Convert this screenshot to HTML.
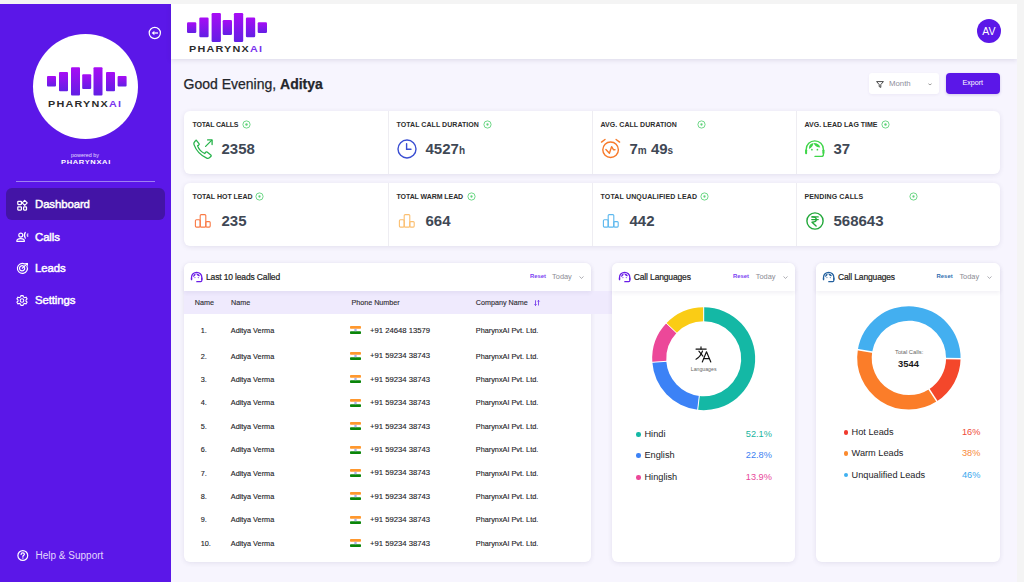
<!DOCTYPE html>
<html><head><meta charset="utf-8">
<style>
*{margin:0;padding:0;box-sizing:border-box}
html,body{width:1024px;height:582px;overflow:hidden;background:#f4f4f4;font-family:"Liberation Sans",sans-serif}
.abs{position:absolute}
svg{overflow:visible}
#app{position:absolute;left:0;top:4px;width:1017px;height:578px;background:#f7f5fe;overflow:hidden}
#side{position:absolute;left:0;top:0;width:171px;height:578px;background:#5b17e8}
.nav{position:absolute;left:0;width:171px;height:20px;color:#fff;font-size:11.4px;font-weight:normal;letter-spacing:-0.1px;white-space:nowrap;-webkit-text-stroke:0.45px #fff}
.nav svg{position:absolute;left:16px}
.nav span{position:absolute;left:35px}
#hdr{position:absolute;left:171px;top:0;width:846px;height:54.5px;background:#fff;box-shadow:0 1.5px 5px rgba(50,40,90,.12)}
.card{position:absolute;background:#fff;border-radius:6px;box-shadow:0 1px 5px rgba(50,40,100,.10)}
.stat{position:absolute;top:0;width:204px;height:63px}
.stat .lbl{position:absolute;left:9px;top:10px;font-size:7px;font-weight:bold;color:#2d2d2d;white-space:nowrap;letter-spacing:0.05px}
.stat .num{position:absolute;left:38px;top:28.5px;font-size:15px;font-weight:bold;color:#3f4855;white-space:nowrap}
.stat .num small{font-size:10px}
.stat .ico{position:absolute;left:9px;top:28px}
.stat .dot{position:absolute;top:8.8px}
.divl{position:absolute;top:0;width:1px;height:63px;background:#eeedf2}
.ch{position:absolute;left:0;top:0;height:28px;background:#fff;border-radius:6px 6px 0 0;box-shadow:0 2px 4px rgba(60,40,120,.07)}
.ch .t{position:absolute;left:22.5px;top:9px;font-size:8.5px;color:#1f1f24;letter-spacing:-0.15px;white-space:nowrap;-webkit-text-stroke:0.2px #1f1f24}
.ch .rs{position:absolute;font-size:5.9px;font-weight:bold;color:#7b3ff2;top:10.6px}
.ch .td{position:absolute;font-size:7.4px;color:#8b8b93;top:9.2px}
.tr{position:absolute;left:0;width:408px;height:20px;font-size:7.3px;color:#222226;white-space:nowrap;-webkit-text-stroke:0.12px #222226}
.tr span{position:absolute;top:0}
.flag{position:absolute;left:166.2px;width:11px;height:8px}
.leg{position:absolute;font-size:9.2px;color:#222226;white-space:nowrap}
.legdot{position:absolute;width:4.5px;height:4.5px;border-radius:50%}
</style></head>
<body>
<div id="app">
  <!-- SIDEBAR -->
  <div id="side">
    <svg class="abs" style="left:148px;top:22px" width="14" height="14" viewBox="0 0 14 14"><circle cx="6.8" cy="7" r="5.6" fill="none" stroke="#fff" stroke-width="1.2"/><path d="M3.7 7 L6.4 4.8 L6.4 9.2 Z" fill="#fff"/><rect x="6.2" y="6.35" width="3.8" height="1.3" fill="#fff"/></svg>
    <div class="abs" style="left:33px;top:30px;width:105px;height:105px;border-radius:50%;background:#fff"></div>
    <svg class="abs" style="left:47px;top:63px" width="80" height="29" viewBox="0 0 80 29">
      <defs><linearGradient id="lg1" x1="0" y1="0" x2="0" y2="1"><stop offset="0" stop-color="#a80cf5"/><stop offset="1" stop-color="#621fe4"/></linearGradient></defs>
      <rect x="0" y="9" width="9" height="10.6" rx="1" fill="url(#lg1)"/>
      <rect x="12" y="5" width="9" height="19.3" rx="1" fill="url(#lg1)"/>
      <rect x="24" y="0.3" width="9" height="28.3" rx="1" fill="url(#lg1)"/>
      <rect x="35.2" y="7.3" width="9" height="14.7" rx="1" fill="url(#lg1)"/>
      <rect x="46.5" y="0.3" width="9" height="28.3" rx="1" fill="url(#lg1)"/>
      <rect x="59" y="5" width="9" height="19.3" rx="1" fill="url(#lg1)"/>
      <rect x="70.6" y="9" width="9" height="10.6" rx="1" fill="url(#lg1)"/>
    </svg>
    <div class="abs" style="left:47.5px;top:94.6px;font-size:8.3px;font-weight:bold;letter-spacing:0.95px;transform:scaleX(1.3);transform-origin:0 0;color:#2b2b2b;white-space:nowrap">PHARYNX<span style="color:#7a33ee">AI</span></div>
    <div class="abs" style="left:71px;top:147.5px;font-size:5.4px;color:#e6dcff;white-space:nowrap">powered by</div>
    <div class="abs" style="left:61px;top:154.5px;font-size:5.8px;font-weight:bold;letter-spacing:0.5px;transform:scaleX(1.3);transform-origin:0 0;color:#fff;white-space:nowrap">PHARYNXAI</div>
    <div class="abs" style="left:16px;top:176.5px;width:139px;height:1px;background:#9f7ff2"></div>
    <div class="abs" style="left:6px;top:184px;width:159px;height:31.6px;border-radius:6px;background:#4314a6"></div>
    <div class="nav" style="top:192px"><svg style="top:3.5px" width="12" height="11" viewBox="0 0 12 11"><g fill="none" stroke="#fff" stroke-width="1.25" stroke-linejoin="round"><rect x="1.8" y="1.3" width="3.6" height="3.3" rx=".5"/><rect x="1.8" y="6.8" width="3.6" height="3.2" rx=".5"/><rect x="7.6" y="6.8" width="2.9" height="3.2" rx=".5"/><path d="M8.7 0.4 L11.2 2.9 L8.7 5.4 L6.2 2.9 Z"/></g></svg><span style="top:2px">Dashboard</span></div>
    <div class="nav" style="top:225px"><svg style="top:3px" width="13" height="11" viewBox="0 0 13 11"><g fill="none" stroke="#fff" stroke-width="1.2" stroke-linecap="round" stroke-linejoin="round"><circle cx="4.8" cy="3.1" r="2"/><path d="M0.8 9.3 C0.8 7.4 2.4 6.7 4.6 6.7 C6.8 6.7 8.4 7.4 8.4 9.3 Z"/><path d="M9.3 0.4 C8.3 2 8.3 4.6 9.3 6.2"/></g><path d="M11.9 1.4 C10.7 2.4 10.7 3.9 11.9 4.9 Z" fill="#e6dcff" stroke="#e6dcff" stroke-width="0.6"/></svg><span style="top:2px">Calls</span></div>
    <div class="nav" style="top:256px"><svg style="top:3px" width="12" height="11" viewBox="0 0 12 11"><g fill="none" stroke="#fff" stroke-width="1.2" stroke-linecap="round"><path d="M10.9 3.2 A5 5 0 1 1 8.6 0.9"/><path d="M7.6 3.2 A2.6 2.6 0 1 0 8.6 4.6"/><path d="M6.3 5.2 L11.2 0.6"/><path d="M9.6 0.5 L11.4 0.5 L11.4 2.2"/></g></svg><span style="top:2px">Leads</span></div>
    <div class="nav" style="top:288px"><svg style="top:3px" width="12" height="11" viewBox="0 0 12 11"><g fill="none" stroke="#fff" stroke-width="1.1"><path d="M5 0.6 h2 l0.4 1.4 l1.3 0.7 l1.4-0.5 l1 1.7 l-1.1 1 v1.3 l1.1 1 l-1 1.7 l-1.4-0.5 l-1.3 0.7 l-0.4 1.4 h-2 l-0.4-1.4 l-1.3-0.7 l-1.4 0.5 l-1-1.7 l1.1-1 v-1.3 l-1.1-1 l1-1.7 l1.4 0.5 l1.3-0.7 z"/><circle cx="6" cy="5.5" r="1.8"/></g></svg><span style="top:2px">Settings</span></div>
    <svg class="abs" style="left:16.5px;top:545.5px" width="12" height="12" viewBox="0 0 12 12"><g fill="none" stroke="#fff" stroke-width="1.2" stroke-linecap="round"><circle cx="5.8" cy="5.5" r="4.9"/><path d="M4.1 4.4 C4.1 3.4 4.9 2.9 5.8 2.9 C6.8 2.9 7.4 3.5 7.4 4.3 C7.4 5.2 5.9 5.4 5.9 6.5"/></g><circle cx="5.9" cy="8" r="0.75" fill="#fff"/></svg>
    <div class="abs" style="left:35.5px;top:546px;font-size:10px;color:#e2d6fd;white-space:nowrap">Help &amp; Support</div>
  </div>

  <!-- HEADER -->
  <div id="hdr">
    <svg class="abs" style="left:16px;top:8.5px" width="81" height="30" viewBox="0 0 81 30">
      <defs><linearGradient id="lg2" x1="0" y1="0" x2="0" y2="1"><stop offset="0" stop-color="#a80cf5"/><stop offset="1" stop-color="#621fe4"/></linearGradient></defs>
      <rect x="0" y="9.2" width="9.3" height="10.8" rx="1.2" fill="url(#lg2)"/>
      <rect x="12.3" y="4.6" width="9.3" height="19.6" rx="1.2" fill="url(#lg2)"/>
      <rect x="24.6" y="0" width="9.3" height="29" rx="1.2" fill="url(#lg2)"/>
      <rect x="35.7" y="7.1" width="9.3" height="14.9" rx="1.2" fill="url(#lg2)"/>
      <rect x="46.9" y="0" width="9.3" height="29" rx="1.2" fill="url(#lg2)"/>
      <rect x="58.9" y="4.6" width="9.3" height="19.6" rx="1.2" fill="url(#lg2)"/>
      <rect x="70.7" y="9.2" width="9.3" height="10.8" rx="1.2" fill="url(#lg2)"/>
    </svg>
    <div class="abs" style="left:17.5px;top:39.7px;font-size:8.3px;font-weight:bold;letter-spacing:0.95px;transform:scaleX(1.3);transform-origin:0 0;color:#2b2b2b;white-space:nowrap">PHARYNX<span style="color:#7a33ee">AI</span></div>
    <div class="abs" style="left:806px;top:15px;width:24px;height:24px;border-radius:50%;background:#5b17e8;color:#fff;font-size:10.5px;text-align:center;line-height:24px;letter-spacing:.2px">AV</div>
  </div>

  <!-- GREETING -->
  <div class="abs" style="left:183.5px;top:71.5px;font-size:14px;color:#24262b;white-space:nowrap;-webkit-text-stroke:0.25px #24262b">Good Evening, <b>Aditya</b></div>
  <div class="abs" style="left:869px;top:69px;width:70px;height:21px;background:#fff;border-radius:3px;box-shadow:0 1px 3px rgba(60,40,120,.06)">
    <svg class="abs" style="left:7px;top:7.5px" width="8" height="7" viewBox="0 0 8 7"><path d="M0.6 0.6 H7.4 L4.8 3.6 V6.4 L3.2 5.6 V3.6 Z" fill="none" stroke="#333" stroke-width="0.9" stroke-linejoin="round"/></svg>
    <div class="abs" style="left:20px;top:5.9px;font-size:7.8px;color:#8e8e9a">Month</div>
    <svg class="abs" style="left:59px;top:9.5px" width="4" height="3" viewBox="0 0 4 3"><path d="M0.4 0.7 L2 1.9 L3.6 0.7" fill="none" stroke="#888" stroke-width="0.8"/></svg>
  </div>
  <div class="abs" style="left:946px;top:69px;width:53.5px;height:21px;background:#5b17e8;border-radius:4px;box-shadow:0 1px 3px rgba(60,20,160,.2);color:#fff;font-size:7.1px;text-align:center;line-height:21px">Export</div>

  <!-- STATS ROW 1 -->
  <div class="card" style="left:183.5px;top:107px;width:816px;height:63px">
    <div class="stat" style="left:0">
      <div class="lbl" style="letter-spacing:-0.180px">TOTAL CALLS</div>
      <svg class="dot" style="left:58.2px" width="9" height="9" viewBox="0 0 9 9"><circle cx="4.5" cy="4.5" r="3.6" fill="none" stroke="#5fd27a" stroke-width="0.9"/><circle cx="4.5" cy="4.5" r="1.2" fill="#5fd27a"/></svg>
      <svg class="ico" style="left:9px;top:27.5px" width="20" height="20" viewBox="0 0 20 20"><g fill="none" stroke="#27b34b" stroke-width="1.3" stroke-linejoin="round" stroke-linecap="round"><path d="M3.2 1.2 L6 4.6 C6.4 5.1 6.2 5.7 5.7 6.1 L4.6 6.9 C5.6 9.8 8.8 13.2 11.7 14.5 L12.6 13.3 C13 12.8 13.6 12.7 14.1 13.1 L17.8 16 C18.3 16.4 18.3 17.1 17.8 17.6 L16.4 18.8 C15.6 19.4 14.6 19.5 13.7 19.1 C7.8 16.4 3.2 11.6 1 5.6 C0.7 4.7 0.8 3.7 1.5 3 L2.6 1.6 C2.8 1.3 3 1.2 3.2 1.2 Z"/><path d="M12.6 7.4 L18.6 1.4"/><path d="M14.6 0.9 H19.1 V5.5"/></g></svg>
      <div class="num">2358</div>
    </div>
    <div class="divl" style="left:204px"></div>
    <div class="stat" style="left:204px">
      <div class="lbl" style="letter-spacing:0.056px">TOTAL CALL DURATION</div>
      <svg class="dot" style="left:95.2px" width="9" height="9" viewBox="0 0 9 9"><circle cx="4.5" cy="4.5" r="3.6" fill="none" stroke="#5fd27a" stroke-width="0.9"/><circle cx="4.5" cy="4.5" r="1.15" fill="#5fd27a"/></svg>
      <svg class="ico" style="left:9px;top:27.5px" width="20" height="20" viewBox="0 0 20 20"><g fill="none" stroke="#3a4ed2" stroke-width="1.4" stroke-linecap="round"><circle cx="10" cy="10" r="9"/><path d="M9.6 4.8 V10.2 H14"/></g></svg>
      <div class="num">4527<small>h</small></div>
    </div>
    <div class="divl" style="left:408px"></div>
    <div class="stat" style="left:408px">
      <div class="lbl" style="letter-spacing:0.056px">AVG. CALL DURATION</div>
      <svg class="dot" style="left:105.2px" width="9" height="9" viewBox="0 0 9 9"><circle cx="4.5" cy="4.5" r="3.6" fill="none" stroke="#5fd27a" stroke-width="0.9"/><circle cx="4.5" cy="4.5" r="1.15" fill="#5fd27a"/></svg>
      <svg class="ico" style="left:8.5px;top:27px" width="21" height="21" viewBox="0 0 21 21"><g fill="none" stroke="#f77a2a" stroke-width="1.4" stroke-linecap="round" stroke-linejoin="round"><circle cx="10.6" cy="11.75" r="7.8"/><path d="M1.5 4.1 L5 1.5"/><path d="M19.6 4.1 L16.1 1.5"/><path d="M5.9 11.6 L9.4 15.2 L11.6 8.6 L13.6 11.8 H15"/></g></svg>
      <div class="num">7<small>m</small> 49<small>s</small></div>
    </div>
    <div class="divl" style="left:612px"></div>
    <div class="stat" style="left:612px">
      <div class="lbl" style="letter-spacing:0.003px">AVG. LEAD LAG TIME</div>
      <svg class="dot" style="left:85.7px" width="9" height="9" viewBox="0 0 9 9"><circle cx="4.5" cy="4.5" r="3.6" fill="none" stroke="#5fd27a" stroke-width="0.9"/><circle cx="4.5" cy="4.5" r="1.2" fill="#5fd27a"/></svg>
      <svg class="ico" style="left:6.5px;top:26px" width="26" height="23" viewBox="0 0 26 23"><g fill="none" stroke="#3ed548" stroke-width="1.35" stroke-linecap="round" stroke-linejoin="round"><path d="M4.2 15.5 V12.4 A8.6 8.6 0 0 1 21.4 12.4 V17.4 Q21.4 19.4 19.4 19.4 H13"/></g><g fill="#3ed548"><rect x="3.1" y="12.4" width="2.0" height="4.8" rx="0.9"/><rect x="20.45" y="12.4" width="2.0" height="4.4" rx="0.9"/><path d="M7 11.9 Q6.6 6.8 11.4 6 Q11.4 9.6 7 11.9 Z"/><path d="M11.5 5.9 Q17.2 5.8 18.2 10.4 Q13.6 10.4 11.5 5.9 Z"/><circle cx="9.9" cy="12.7" r="0.85"/><circle cx="15.4" cy="12.7" r="0.85"/></g></svg>
      <div class="num">37</div>
    </div>
  </div>

  <!-- STATS ROW 2 -->
  <div class="card" style="left:183.5px;top:179px;width:816px;height:63px">
    <div class="stat" style="left:0">
      <div class="lbl" style="letter-spacing:-0.012px">TOTAL HOT LEAD</div>
      <svg class="dot" style="left:71.7px" width="9" height="9" viewBox="0 0 9 9"><circle cx="4.5" cy="4.5" r="3.6" fill="none" stroke="#5fd27a" stroke-width="0.9"/><circle cx="4.5" cy="4.5" r="1.15" fill="#5fd27a"/></svg>
      <svg class="ico" style="left:10px;top:30px" width="18" height="15" viewBox="0 0 18 15"><g fill="none" stroke="#f97a45" stroke-width="1.1" stroke-linejoin="round"><rect x="1.4" y="6.7" width="4.8" height="7.4" rx="1"/><rect x="6.2" y="1.6" width="5.6" height="12.5" rx="1"/><rect x="11.8" y="8.6" width="4.4" height="5.5" rx="1"/></g></svg>
      <div class="num">235</div>
    </div>
    <div class="divl" style="left:204px"></div>
    <div class="stat" style="left:204px">
      <div class="lbl" style="letter-spacing:-0.071px">TOTAL WARM LEAD</div>
      <svg class="dot" style="left:79.7px" width="9" height="9" viewBox="0 0 9 9"><circle cx="4.5" cy="4.5" r="3.6" fill="none" stroke="#5fd27a" stroke-width="0.9"/><circle cx="4.5" cy="4.5" r="1.15" fill="#5fd27a"/></svg>
      <svg class="ico" style="left:10px;top:30px" width="18" height="15" viewBox="0 0 18 15"><g fill="none" stroke="#fbbf70" stroke-width="1.1" stroke-linejoin="round"><rect x="1.4" y="6.7" width="4.8" height="7.4" rx="1"/><rect x="6.2" y="1.6" width="5.6" height="12.5" rx="1"/><rect x="11.8" y="8.6" width="4.4" height="5.5" rx="1"/></g></svg>
      <div class="num">664</div>
    </div>
    <div class="divl" style="left:408px"></div>
    <div class="stat" style="left:408px">
      <div class="lbl" style="letter-spacing:0.155px">TOTAL UNQUALIFIED LEAD</div>
      <svg class="dot" style="left:108.2px" width="9" height="9" viewBox="0 0 9 9"><circle cx="4.5" cy="4.5" r="3.6" fill="none" stroke="#5fd27a" stroke-width="0.9"/><circle cx="4.5" cy="4.5" r="1.15" fill="#5fd27a"/></svg>
      <svg class="ico" style="left:10px;top:30px" width="18" height="15" viewBox="0 0 18 15"><g fill="none" stroke="#5cb8ee" stroke-width="1.1" stroke-linejoin="round"><rect x="1.4" y="6.7" width="4.8" height="7.4" rx="1"/><rect x="6.2" y="1.6" width="5.6" height="12.5" rx="1"/><rect x="11.8" y="8.6" width="4.4" height="5.5" rx="1"/></g></svg>
      <div class="num">442</div>
    </div>
    <div class="divl" style="left:612px"></div>
    <div class="stat" style="left:612px">
      <div class="lbl" style="letter-spacing:0.125px">PENDING CALLS</div>
      <svg class="dot" style="left:113.2px" width="9" height="9" viewBox="0 0 9 9"><circle cx="4.5" cy="4.5" r="3.6" fill="none" stroke="#5fd27a" stroke-width="0.9"/><circle cx="4.5" cy="4.5" r="1.15" fill="#5fd27a"/></svg>
      <svg class="ico" style="left:10px;top:28.5px" width="18" height="18" viewBox="0 0 18 18"><g fill="none" stroke="#22a83a" stroke-width="1.4" stroke-linecap="round" stroke-linejoin="round"><circle cx="9" cy="9" r="8.1"/><path d="M5.8 4.9 H12.2"/><path d="M5.8 7.6 H12.2"/><path d="M6.4 4.9 C9.2 4.9 10.3 5.7 10.3 7.6 C10.3 9.4 9 10.2 6 10.2 L10.1 14"/></g></svg>
      <div class="num">568643</div>
    </div>
  </div>
<!-- TABLE CARD -->
<div class="card" style="left:183.5px;top:258.8px;width:407.5px;height:299px;overflow:visible">
  <div class="abs" style="left:0;top:28.4px;width:428px;height:23.3px;background:#efeafd"></div>
  <div class="ch" style="width:407.5px">
    <svg class="abs" style="left:5.4px;top:7.1px" width="15.6" height="13.8" viewBox="0 0 26 23"><g fill="none" stroke="#6a1de6" stroke-width="2.1" stroke-linecap="round" stroke-linejoin="round"><path d="M4.2 15.5 V12.4 A8.6 8.6 0 0 1 21.4 12.4 V17.4 Q21.4 19.4 19.4 19.4 H13"/></g><g fill="#6a1de6"><rect x="3.1" y="12.4" width="2.2" height="4.8" rx="0.9"/><rect x="20.25" y="12.4" width="2.2" height="4.4" rx="0.9"/><path d="M7 11.9 Q6.6 6.8 11.4 6 Q11.4 9.6 7 11.9 Z"/><path d="M11.5 5.9 Q17.2 5.8 18.2 10.4 Q13.6 10.4 11.5 5.9 Z"/><circle cx="9.9" cy="12.7" r="0.85"/><circle cx="15.4" cy="12.7" r="0.85"/></g></svg>
    <div class="t" style="top:9.3px">Last 10 leads Called</div>
    <div class="rs" style="left:346.4px">Reset</div>
    <div class="td" style="left:368.6px">Today</div>
    <svg class="abs" style="left:395px;top:13px" width="5" height="3" viewBox="0 0 5 3"><path d="M0.5 0.5 L2.5 2.4 L4.5 0.5" fill="none" stroke="#8b8b93" stroke-width="0.7"/></svg>
  </div>
  <div class="tr" style="top:35.5px;font-size:7.2px;color:#2f2f35"><span style="left:11.3px">Name</span><span style="left:47.5px">Name</span><span style="left:167.9px">Phone Number</span><span style="left:292.3px">Company Name</span><svg class="abs" style="left:350px;top:1.5px" width="6" height="6" viewBox="0 0 6 6"><g fill="none" stroke="#6a2be8" stroke-width="0.8"><path d="M1.5 0.3 V5.5 M0.4 4.3 L1.5 5.5 L2.6 4.3"/><path d="M4.5 5.5 V0.3 M3.4 1.5 L4.5 0.3 L5.6 1.5"/></g></svg></div>
  <div class="tr" style="top:63.2px"><span style="left:17.2px">1.</span><span style="left:47.3px">Aditya Verma</span><svg class="flag" style="top:0.4px" width="11" height="8" viewBox="0 0 11 8"><rect x="0" y="0" width="11" height="2.8" rx="0.8" fill="#ff982e"/><rect x="0" y="5.2" width="11" height="2.8" rx="0.8" fill="#0a850a"/><circle cx="5.5" cy="4" r="1.3" fill="#aab0e8"/></svg><span style="left:186.5px;font-size:7.7px;top:-0.3px">+91 24648 13579</span><span style="left:292.3px">PharynxAI Pvt. Ltd.</span></div>
  <div class="tr" style="top:88.9px"><span style="left:17.2px">2.</span><span style="left:47.3px">Aditya Verma</span><svg class="flag" style="top:0.4px" width="11" height="8" viewBox="0 0 11 8"><rect x="0" y="0" width="11" height="2.8" rx="0.8" fill="#ff982e"/><rect x="0" y="5.2" width="11" height="2.8" rx="0.8" fill="#0a850a"/><circle cx="5.5" cy="4" r="1.3" fill="#aab0e8"/></svg><span style="left:186.5px;font-size:7.7px;top:-0.3px">+91 59234 38743</span><span style="left:292.3px">PharynxAI Pvt. Ltd.</span></div>
  <div class="tr" style="top:112.3px"><span style="left:17.2px">3.</span><span style="left:47.3px">Aditya Verma</span><svg class="flag" style="top:0.4px" width="11" height="8" viewBox="0 0 11 8"><rect x="0" y="0" width="11" height="2.8" rx="0.8" fill="#ff982e"/><rect x="0" y="5.2" width="11" height="2.8" rx="0.8" fill="#0a850a"/><circle cx="5.5" cy="4" r="1.3" fill="#aab0e8"/></svg><span style="left:186.5px;font-size:7.7px;top:-0.3px">+91 59234 38743</span><span style="left:292.3px">PharynxAI Pvt. Ltd.</span></div>
  <div class="tr" style="top:135.7px"><span style="left:17.2px">4.</span><span style="left:47.3px">Aditya Verma</span><svg class="flag" style="top:0.4px" width="11" height="8" viewBox="0 0 11 8"><rect x="0" y="0" width="11" height="2.8" rx="0.8" fill="#ff982e"/><rect x="0" y="5.2" width="11" height="2.8" rx="0.8" fill="#0a850a"/><circle cx="5.5" cy="4" r="1.3" fill="#aab0e8"/></svg><span style="left:186.5px;font-size:7.7px;top:-0.3px">+91 59234 38743</span><span style="left:292.3px">PharynxAI Pvt. Ltd.</span></div>
  <div class="tr" style="top:159.1px"><span style="left:17.2px">5.</span><span style="left:47.3px">Aditya Verma</span><svg class="flag" style="top:0.4px" width="11" height="8" viewBox="0 0 11 8"><rect x="0" y="0" width="11" height="2.8" rx="0.8" fill="#ff982e"/><rect x="0" y="5.2" width="11" height="2.8" rx="0.8" fill="#0a850a"/><circle cx="5.5" cy="4" r="1.3" fill="#aab0e8"/></svg><span style="left:186.5px;font-size:7.7px;top:-0.3px">+91 59234 38743</span><span style="left:292.3px">PharynxAI Pvt. Ltd.</span></div>
  <div class="tr" style="top:182.5px"><span style="left:17.2px">6.</span><span style="left:47.3px">Aditya Verma</span><svg class="flag" style="top:0.4px" width="11" height="8" viewBox="0 0 11 8"><rect x="0" y="0" width="11" height="2.8" rx="0.8" fill="#ff982e"/><rect x="0" y="5.2" width="11" height="2.8" rx="0.8" fill="#0a850a"/><circle cx="5.5" cy="4" r="1.3" fill="#aab0e8"/></svg><span style="left:186.5px;font-size:7.7px;top:-0.3px">+91 59234 38743</span><span style="left:292.3px">PharynxAI Pvt. Ltd.</span></div>
  <div class="tr" style="top:205.9px"><span style="left:17.2px">7.</span><span style="left:47.3px">Aditya Verma</span><svg class="flag" style="top:0.4px" width="11" height="8" viewBox="0 0 11 8"><rect x="0" y="0" width="11" height="2.8" rx="0.8" fill="#ff982e"/><rect x="0" y="5.2" width="11" height="2.8" rx="0.8" fill="#0a850a"/><circle cx="5.5" cy="4" r="1.3" fill="#aab0e8"/></svg><span style="left:186.5px;font-size:7.7px;top:-0.3px">+91 59234 38743</span><span style="left:292.3px">PharynxAI Pvt. Ltd.</span></div>
  <div class="tr" style="top:229.3px"><span style="left:17.2px">8.</span><span style="left:47.3px">Aditya Verma</span><svg class="flag" style="top:0.4px" width="11" height="8" viewBox="0 0 11 8"><rect x="0" y="0" width="11" height="2.8" rx="0.8" fill="#ff982e"/><rect x="0" y="5.2" width="11" height="2.8" rx="0.8" fill="#0a850a"/><circle cx="5.5" cy="4" r="1.3" fill="#aab0e8"/></svg><span style="left:186.5px;font-size:7.7px;top:-0.3px">+91 59234 38743</span><span style="left:292.3px">PharynxAI Pvt. Ltd.</span></div>
  <div class="tr" style="top:252.7px"><span style="left:17.2px">9.</span><span style="left:47.3px">Aditya Verma</span><svg class="flag" style="top:0.4px" width="11" height="8" viewBox="0 0 11 8"><rect x="0" y="0" width="11" height="2.8" rx="0.8" fill="#ff982e"/><rect x="0" y="5.2" width="11" height="2.8" rx="0.8" fill="#0a850a"/><circle cx="5.5" cy="4" r="1.3" fill="#aab0e8"/></svg><span style="left:186.5px;font-size:7.7px;top:-0.3px">+91 59234 38743</span><span style="left:292.3px">PharynxAI Pvt. Ltd.</span></div>
  <div class="tr" style="top:276.1px"><span style="left:17.2px">10.</span><span style="left:47.3px">Aditya Verma</span><svg class="flag" style="top:0.4px" width="11" height="8" viewBox="0 0 11 8"><rect x="0" y="0" width="11" height="2.8" rx="0.8" fill="#ff982e"/><rect x="0" y="5.2" width="11" height="2.8" rx="0.8" fill="#0a850a"/><circle cx="5.5" cy="4" r="1.3" fill="#aab0e8"/></svg><span style="left:186.5px;font-size:7.7px;top:-0.3px">+91 59234 38743</span><span style="left:292.3px">PharynxAI Pvt. Ltd.</span></div>
</div>
<!-- LANG CARD -->
<div class="card" style="left:611.8px;top:258.8px;width:183px;height:299px">
  <div class="ch" style="width:183px">
    <svg class="abs" style="left:5.4px;top:7.1px" width="15.6" height="13.8" viewBox="0 0 26 23"><g fill="none" stroke="#6a1de6" stroke-width="2.1" stroke-linecap="round" stroke-linejoin="round"><path d="M4.2 15.5 V12.4 A8.6 8.6 0 0 1 21.4 12.4 V17.4 Q21.4 19.4 19.4 19.4 H13"/></g><g fill="#6a1de6"><rect x="3.1" y="12.4" width="2.2" height="4.8" rx="0.9"/><rect x="20.25" y="12.4" width="2.2" height="4.4" rx="0.9"/><path d="M7 11.9 Q6.6 6.8 11.4 6 Q11.4 9.6 7 11.9 Z"/><path d="M11.5 5.9 Q17.2 5.8 18.2 10.4 Q13.6 10.4 11.5 5.9 Z"/><circle cx="9.9" cy="12.7" r="0.85"/><circle cx="15.4" cy="12.7" r="0.85"/></g></svg>
    <div class="t" style="left:22px;top:9.3px">Call Languages</div>
    <div class="rs" style="left:121.2px">Reset</div>
    <div class="td" style="left:144px">Today</div>
    <svg class="abs" style="left:171px;top:13px" width="5" height="3" viewBox="0 0 5 3"><path d="M0.5 0.5 L2.5 2.4 L4.5 0.5" fill="none" stroke="#8b8b93" stroke-width="0.7"/></svg>
  </div>
  <svg class="abs" style="left:37.90000000000002px;top:42.10000000000001px" width="107.4" height="107.4" viewBox="-53.7 -53.7 107.4 107.4"><path d="M0.00 -51.50 A51.5 51.5 0 1 1 -6.01 51.15 L-4.38 37.24 A37.5 37.5 0 1 0 0.00 -37.50 Z" fill="#14b8a5"/><path d="M-6.01 51.15 A51.5 51.5 0 0 1 -51.37 3.59 L-37.41 2.62 A37.5 37.5 0 0 0 -4.38 37.24 Z" fill="#3c82f6"/><path d="M-51.37 3.59 A51.5 51.5 0 0 1 -37.36 -35.45 L-27.20 -25.81 A37.5 37.5 0 0 0 -37.41 2.62 Z" fill="#ec4899"/><path d="M-37.36 -35.45 A51.5 51.5 0 0 1 -0.00 -51.50 L-0.00 -37.50 A37.5 37.5 0 0 0 -27.20 -25.81 Z" fill="#facc15"/><line x1="0.00" y1="-36.50" x2="0.00" y2="-52.50" stroke="#fff" stroke-width="1.0"/><line x1="-4.26" y1="36.25" x2="-6.13" y2="52.14" stroke="#fff" stroke-width="1.0"/><line x1="-36.41" y1="2.55" x2="-52.37" y2="3.66" stroke="#fff" stroke-width="1.0"/><line x1="-26.48" y1="-25.12" x2="-38.08" y2="-36.14" stroke="#fff" stroke-width="1.0"/></svg>
  <svg class="abs" style="left:83.2px;top:83.7px" width="17" height="17" viewBox="0 0 17 17"><g fill="none" stroke="#111" stroke-width="1.15" stroke-linecap="round" stroke-linejoin="round"><path d="M1 3.1 H11.2"/><path d="M6 0.9 V3.1"/><path d="M3.9 5.1 L7.9 10.2"/><path d="M7.5 5 C6.4 8.2 4.4 11.4 1 13.2"/><path d="M7.3 16 L11.5 5.8 L15.8 16"/><path d="M8.7 12.6 H14.3"/></g></svg>
  <div class="abs" style="left:79.0px;top:103.4px;font-size:5.2px;color:#666;white-space:nowrap">Languages</div>
  <div class="legdot" style="left:24.3px;top:169.6px;background:#14b8a5"></div>
  <div class="leg" style="left:32.7px;top:166.2px">Hindi</div>
  <div class="leg" style="right:22.9px;top:166.2px;color:#19b5a0">52.1%</div>
  <div class="legdot" style="left:24.3px;top:190.6px;background:#3c82f6"></div>
  <div class="leg" style="left:32.7px;top:187.2px">English</div>
  <div class="leg" style="right:22.9px;top:187.2px;color:#3c7ff2">22.8%</div>
  <div class="legdot" style="left:24.3px;top:212.6px;background:#ec4899"></div>
  <div class="leg" style="left:32.7px;top:209.2px">Hinglish</div>
  <div class="leg" style="right:22.9px;top:209.2px;color:#e8479a">13.9%</div>
</div>
<!-- LEADS CARD -->
<div class="card" style="left:816px;top:258.8px;width:183.5px;height:299px">
  <div class="ch" style="width:183.5px">
    <svg class="abs" style="left:5.2px;top:7.1px" width="15.6" height="13.8" viewBox="0 0 26 23"><g fill="none" stroke="#22609e" stroke-width="2.1" stroke-linecap="round" stroke-linejoin="round"><path d="M4.2 15.5 V12.4 A8.6 8.6 0 0 1 21.4 12.4 V17.4 Q21.4 19.4 19.4 19.4 H13"/></g><g fill="#22609e"><rect x="3.1" y="12.4" width="2.2" height="4.8" rx="0.9"/><rect x="20.25" y="12.4" width="2.2" height="4.4" rx="0.9"/><path d="M7 11.9 Q6.6 6.8 11.4 6 Q11.4 9.6 7 11.9 Z"/><path d="M11.5 5.9 Q17.2 5.8 18.2 10.4 Q13.6 10.4 11.5 5.9 Z"/><circle cx="9.9" cy="12.7" r="0.85"/><circle cx="15.4" cy="12.7" r="0.85"/></g></svg>
    <div class="t" style="left:22px;top:9.3px">Call Languages</div>
    <div class="rs" style="left:120.6px;color:#2f6fb0">Reset</div>
    <div class="td" style="left:143.4px">Today</div>
    <svg class="abs" style="left:171px;top:13px" width="5" height="3" viewBox="0 0 5 3"><path d="M0.5 0.5 L2.5 2.4 L4.5 0.5" fill="none" stroke="#8b8b93" stroke-width="0.7"/></svg>
  </div>
  <svg class="abs" style="left:39.200000000000024px;top:40.79999999999999px" width="107.8" height="107.8" viewBox="-53.9 -53.9 107.8 107.8"><path d="M51.69 0.72 A51.7 51.7 0 0 1 28.01 43.46 L20.15 31.27 A37.2 37.2 0 0 0 37.20 0.52 Z" fill="#f4472b"/><path d="M28.01 43.46 A51.7 51.7 0 0 1 -51.05 -8.18 L-36.73 -5.88 A37.2 37.2 0 0 0 20.15 31.27 Z" fill="#fb7d29"/><path d="M-51.05 -8.18 A51.7 51.7 0 0 1 51.69 0.72 L37.20 0.52 A37.2 37.2 0 0 0 -36.73 -5.88 Z" fill="#43aff0"/><line x1="36.20" y1="0.51" x2="52.69" y2="0.74" stroke="#fff" stroke-width="1.5"/><line x1="19.61" y1="30.43" x2="28.55" y2="44.30" stroke="#fff" stroke-width="1.5"/><line x1="-35.74" y1="-5.73" x2="-52.04" y2="-8.33" stroke="#fff" stroke-width="1.5"/></svg>
  <div class="abs" style="left:79.0px;top:85.8px;font-size:5.8px;color:#666;white-space:nowrap">Total Calls:</div>
  <div class="abs" style="left:82px;top:95.5px;font-size:9.4px;font-weight:bold;color:#1a1a1a;white-space:nowrap">3544</div>
  <div class="legdot" style="left:27.6px;top:167.6px;background:#f03a2e"></div>
  <div class="leg" style="left:35.6px;top:164.2px">Hot Leads</div>
  <div class="leg" style="right:19.2px;top:164.2px;color:#f04b3a">16%</div>
  <div class="legdot" style="left:27.6px;top:188.6px;background:#fb8a2e"></div>
  <div class="leg" style="left:35.6px;top:185.2px">Warm Leads</div>
  <div class="leg" style="right:19.2px;top:185.2px;color:#f8893a">38%</div>
  <div class="legdot" style="left:27.6px;top:210.1px;background:#3fb0f0"></div>
  <div class="leg" style="left:35.6px;top:206.8px">Unqualified Leads</div>
  <div class="leg" style="right:19.2px;top:206.8px;color:#3aa8ee">46%</div>
</div>
</div>
</body></html>
